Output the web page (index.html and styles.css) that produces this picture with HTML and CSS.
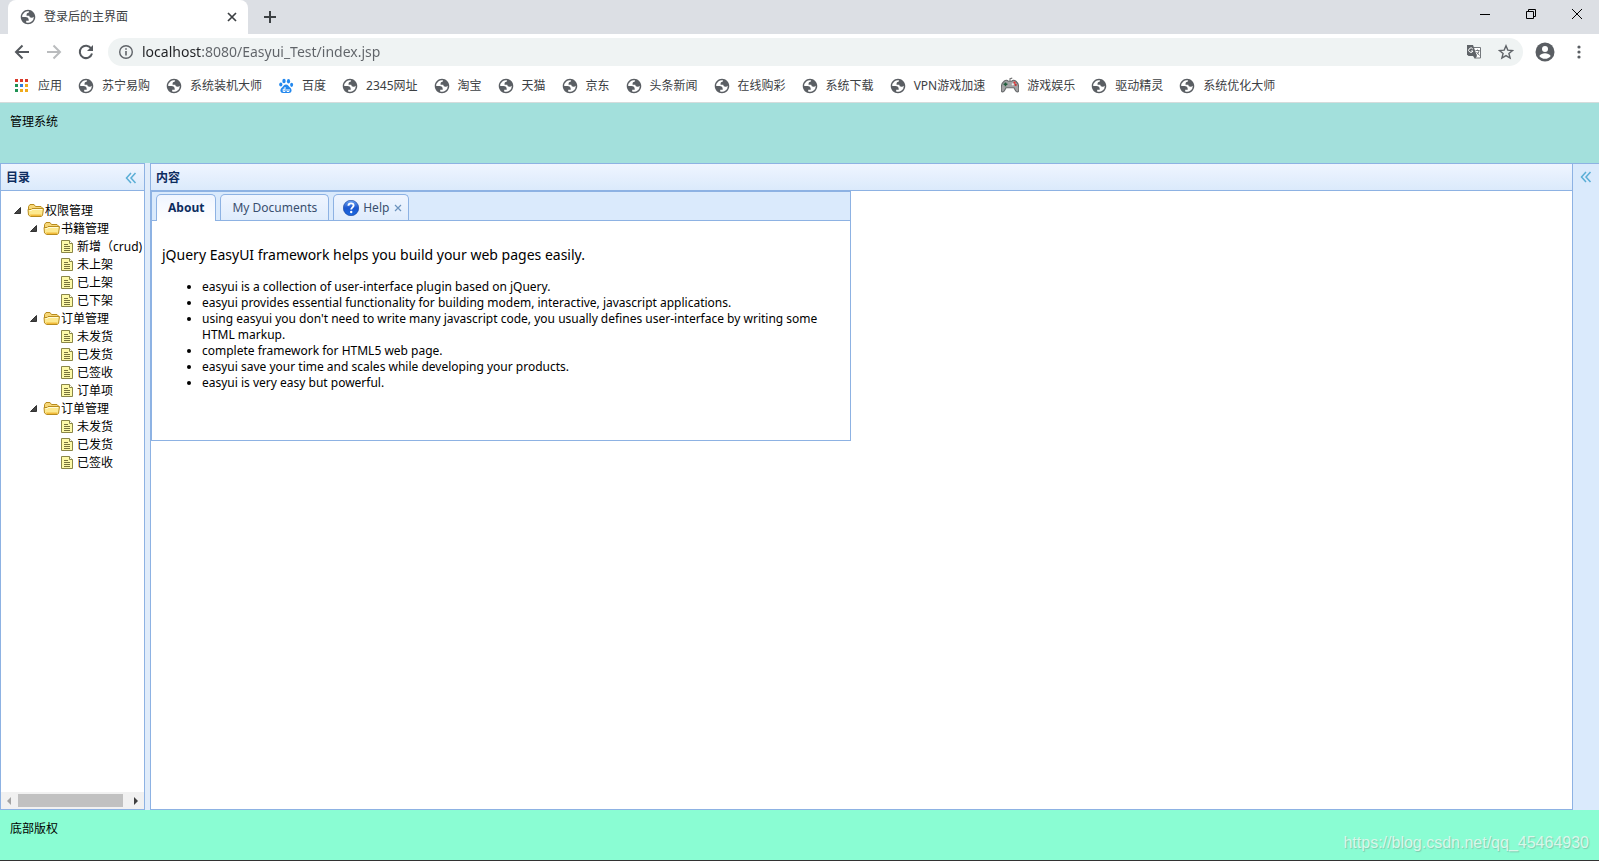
FILE: index.html
```
<!DOCTYPE html>
<html lang="zh-CN">
<head>
<meta charset="utf-8">
<title>登录后的主界面</title>
<link rel="stylesheet" href="styles.css">
</head>
<body>
<svg class="defs" width="0" height="0" aria-hidden="true">
  <symbol id="globe" viewBox="1 1 22 22">
    <path fill-rule="evenodd" d="M12 2C6.480 2 2 6.480 2 12s4.480 10 10 10 10-4.480 10-10S17.520 2 12 2zM4 12h4.400c3.407.022 4.922 1.730 4.543 5.127H9.488v2.470a8.004 8.004 0 0 0 10.498-8.083C19.327 12.504 18.332 13 17 13c-2.137 0-3.206-.916-3.206-2.750h-3.748c-.274-2.728.683-4.092 2.870-4.092 0-.975.327-1.597.811-1.970A8.004 8.004 0 0 0 4 12z" fill="#5a5e63"/>
  </symbol>
  <symbol id="folder" viewBox="0 0 18 18">
    <path d="M1.500 8V4.500l1.500-2h4l1.500 2H14l1.500 1.500v3" fill="#f7d777" stroke="#b98c1e"/>
    <path d="M1 7.500h3l1-1h11.500l-1 7-1.500 1H3.500L1.500 13z" fill="#fde98e" stroke="#b98c1e"/>
    <path d="M3 12.500h11.500l-.5 1.500H3.500z" fill="#f2bb3c"/>
    <path d="M2.500 8.500h2l1-1h9.500" fill="none" stroke="#fffbd6"/>
  </symbol>
  <symbol id="file" viewBox="0 0 18 18">
    <path d="M2.500 2.500h8l3 3v9h-11z" fill="#fdf9a8" stroke="#8a8648"/>
    <path d="M10.500 2.500v3h3" fill="#fff" stroke="#8a8648"/>
    <path d="M5 6.500h4M5 8.500h6M5 10.500h6M5 12.500h6" stroke="#77733c"/>
  </symbol>
  <symbol id="open" viewBox="0 0 16 18"><path d="M9.500 5.500v6h-6z" fill="#444" stroke="#333"/></symbol>
  <symbol id="collapse" viewBox="0 0 16 16"><path d="M8 3L3.500 8 8 13M12.500 3L8 8l4.500 5" fill="none" stroke="#5aaed6" stroke-width="1.500"/></symbol>
</svg>

<header class="browser">
  <div class="tabstrip">
    <div class="browser-tab">
      <svg class="i16"><use href="#globe"/></svg>
      <span class="browser-title">登录后的主界面</span>
      <button class="plain" aria-label="关闭标签页"><svg class="i16" viewBox="0 0 16 16"><path d="M4 4l8 8M12 4l-8 8" stroke="#3c4043" stroke-width="1.700"/></svg></button>
    </div>
    <button class="plain new-tab" aria-label="新标签页"><svg class="i16" viewBox="0 0 16 16"><path d="M8 2v12M2 8h12" stroke="#3c4043" stroke-width="2"/></svg></button>
    <div class="window-buttons">
      <button class="plain" aria-label="最小化"><svg class="i16" viewBox="0 0 16 16"><path d="M3 8.500h10" stroke="#000"/></svg></button>
      <button class="plain" aria-label="还原"><svg class="i16" viewBox="0 0 16 16"><path d="M3.500 5.500h7v7h-7zM5.500 5V3.500h7v7H11" fill="none" stroke="#000"/></svg></button>
      <button class="plain" aria-label="关闭"><svg class="i16" viewBox="0 0 16 16"><path d="M3 3l10 10M13 3L3 13" stroke="#000"/></svg></button>
    </div>
  </div>
  <div class="toolbar">
    <button class="plain" aria-label="后退"><svg class="i16" viewBox="0 0 16 16"><path d="M15 8H2.500M8.500 1.500L2 8l6.500 6.500" fill="none" stroke="#55595e" stroke-width="2"/></svg></button>
    <button class="plain" aria-label="前进"><svg class="i16" viewBox="0 0 16 16"><path d="M1 8h12.500M7.500 1.500L14 8l-6.500 6.500" fill="none" stroke="#babcbe" stroke-width="2"/></svg></button>
    <button class="plain" aria-label="刷新"><svg class="i16" viewBox="0 0 16 16"><path d="M13.200 4.500A6.200 6.200 0 1 0 14 9.500" fill="none" stroke="#55595e" stroke-width="2"/><path d="M15 1v6H9z" fill="#55595e"/></svg></button>
    <div class="omnibox">
      <svg class="i16" viewBox="0 0 16 16"><circle cx="8" cy="8" r="6.300" fill="none" stroke="#5f6368" stroke-width="1.400"/><path d="M8 7v4.500M8 4.200v1.600" stroke="#5f6368" stroke-width="1.600"/></svg>
      <input class="url" type="text" aria-label="地址" value="localhost:8080/Easyui_Test/index.jsp">
      <button class="plain" aria-label="翻译此页"><svg class="i16" viewBox="0 0 16 16"><path d="M7.500 3.500h7v10.500h-5" fill="#fff" stroke="#74787c"/><path d="M1 1h6l4 11H2.500L1 10.500z" fill="#5f6368"/><path d="M7 12h4l-2 3z" fill="#5f6368"/><path d="M6.800 5A2.200 2.200 0 1 0 7 7H5" fill="none" stroke="#fff"/><path d="M9.500 6.500h4M11.500 5.500v1M13 6.500c0 2-1.500 3.500-2.500 4M10.500 8l3 3.500" fill="none" stroke="#74787c"/></svg></button>
      <button class="plain" aria-label="收藏"><svg class="i16" viewBox="0 0 16 16"><path d="M8 1.800l1.800 4.300 4.700.4-3.600 3 1.200 4.600L8 11.600l-4.100 2.500 1.200-4.600-3.600-3 4.700-.4z" fill="none" stroke="#5f6368" stroke-width="1.400"/></svg></button>
    </div>
    <button class="plain" aria-label="用户"><svg class="i20" viewBox="0 0 20 20"><circle cx="10" cy="10" r="9.500" fill="#5a5e63"/><circle cx="10" cy="7" r="3" fill="#fff"/><path d="M4.300 14c1.200-2 3.400-2.800 5.700-2.800s4.500.8 5.700 2.800c-1.300 1.900-3.400 2.800-5.700 2.800S5.600 15.900 4.300 14z" fill="#fff"/></svg></button>
    <button class="plain" aria-label="菜单"><svg class="i16" viewBox="0 0 16 16"><g fill="#5a5e63"><circle cx="8" cy="3" r="1.600"/><circle cx="8" cy="8" r="1.600"/><circle cx="8" cy="13" r="1.600"/></g></svg></button>
  </div>
  <nav class="bookmarks" aria-label="书签">
    <a href="#"><svg class="i16" viewBox="0 0 16 16"><g fill="#d93a2b"><path d="M1 1h3v3H1zM6 1h3v3H6zM11 1h3v3h-3z"/></g><path d="M1 6h3v3H1zM1 11h3v3H1z" fill="#1f9254"/><path d="M6 6h3v3H6z" fill="#2f7de1"/><path d="M11 6h3v3h-3zM6 11h3v3H6zM11 11h3v3h-3z" fill="#f0ab1c"/></svg>应用</a>
    <a href="#"><svg class="i16"><use href="#globe"/></svg>苏宁易购</a>
    <a href="#"><svg class="i16"><use href="#globe"/></svg>系统装机大师</a>
    <a href="#"><svg class="i16" viewBox="0 0 16 16"><g fill="#2388ee"><ellipse cx="6" cy="3" rx="1.700" ry="2.300"/><ellipse cx="10.500" cy="3.200" rx="1.600" ry="2.200"/><ellipse cx="2.800" cy="6.500" rx="1.600" ry="2.100"/><ellipse cx="13.600" cy="6.800" rx="1.500" ry="2.100"/><path d="M8 6.500c2 0 2.600 1.800 4 3 2.600 2.200 1.800 5.500-1 5.500H5c-2.800 0-3.600-3.300-1-5.500 1.400-1.200 2-3 4-3z"/></g><path d="M7 9v4.500H5.200v-2.300H7M9 11v2.500h2V11" fill="none" stroke="#fff"/></svg>百度</a>
    <a href="#"><svg class="i16"><use href="#globe"/></svg>2345网址</a>
    <a href="#"><svg class="i16"><use href="#globe"/></svg>淘宝</a>
    <a href="#"><svg class="i16"><use href="#globe"/></svg>天猫</a>
    <a href="#"><svg class="i16"><use href="#globe"/></svg>京东</a>
    <a href="#"><svg class="i16"><use href="#globe"/></svg>头条新闻</a>
    <a href="#"><svg class="i16"><use href="#globe"/></svg>在线购彩</a>
    <a href="#"><svg class="i16"><use href="#globe"/></svg>系统下载</a>
    <a href="#"><svg class="i16"><use href="#globe"/></svg>VPN游戏加速</a>
    <a href="#"><svg class="i18" viewBox="0 0 16 16"><path d="M3 3.500c1.500-1 3-.5 3.500.3h3c.5-.8 2-1.300 3.500-.3C15 5 16 9 15.700 12c-.3 1.800-2 1.500-2.700.2L11.500 9.500h-7L3 12.200c-.700 1.300-2.400 1.600-2.700-.2C0 9 1 5 3 3.500z" fill="#a3a3a5" stroke="#66696b"/><path d="M8 4V1.500L10 1" fill="none" stroke="#777"/><path d="M4 4.800v3.400M2.300 6.500h3.400" stroke="#1f5c3b" stroke-width="1.400"/><circle cx="12" cy="5" r="1" fill="#e33"/><circle cx="13" cy="7" r="1" fill="#c33"/><circle cx="10.500" cy="6.500" r="1" fill="#eee"/></svg>游戏娱乐</a>
    <a href="#"><svg class="i16"><use href="#globe"/></svg>驱动精灵</a>
    <a href="#"><svg class="i16"><use href="#globe"/></svg>系统优化大师</a>
  </nav>
</header>

<div class="north">管理系统</div>

<div class="middle">
  <aside class="panel west">
    <div class="panel-header"><h2>目录</h2><button class="plain" aria-label="折叠"><svg class="i16"><use href="#collapse"/></svg></button></div>
    <div class="tree-wrap">
      <ul class="tree">
        <li><div class="node"><svg class="hit"><use href="#open"/></svg><svg class="i18"><use href="#folder"/></svg>权限管理</div>
          <ul>
            <li><div class="node"><svg class="hit"><use href="#open"/></svg><svg class="i18"><use href="#folder"/></svg>书籍管理</div>
              <ul class="leaves">
                <li class="node"><svg class="i18"><use href="#file"/></svg>新增（crud)</li>
                <li class="node"><svg class="i18"><use href="#file"/></svg>未上架</li>
                <li class="node"><svg class="i18"><use href="#file"/></svg>已上架</li>
                <li class="node"><svg class="i18"><use href="#file"/></svg>已下架</li>
              </ul></li>
            <li><div class="node"><svg class="hit"><use href="#open"/></svg><svg class="i18"><use href="#folder"/></svg>订单管理</div>
              <ul class="leaves">
                <li class="node"><svg class="i18"><use href="#file"/></svg>未发货</li>
                <li class="node"><svg class="i18"><use href="#file"/></svg>已发货</li>
                <li class="node"><svg class="i18"><use href="#file"/></svg>已签收</li>
                <li class="node"><svg class="i18"><use href="#file"/></svg>订单项</li>
              </ul></li>
            <li><div class="node"><svg class="hit"><use href="#open"/></svg><svg class="i18"><use href="#folder"/></svg>订单管理</div>
              <ul class="leaves">
                <li class="node"><svg class="i18"><use href="#file"/></svg>未发货</li>
                <li class="node"><svg class="i18"><use href="#file"/></svg>已发货</li>
                <li class="node"><svg class="i18"><use href="#file"/></svg>已签收</li>
              </ul></li>
          </ul></li>
      </ul>
    </div>
    <div class="scrollbar">
      <button class="plain" aria-label="向左滚动"><svg class="i16" viewBox="0 0 16 16"><path d="M10 4v8L6 8z" fill="#a3a3a3"/></svg></button>
      <div class="track"><div class="thumb"></div></div>
      <button class="plain" aria-label="向右滚动"><svg class="i16" viewBox="0 0 16 16"><path d="M6 4v8l4-4z" fill="#404040"/></svg></button>
    </div>
  </aside>

  <main class="panel center">
    <div class="panel-header"><h2>内容</h2></div>
    <section class="tabs">
      <div class="tabs-header" role="tablist">
        <button class="tab selected" role="tab" aria-selected="true">About</button>
        <button class="tab" role="tab">My Documents</button>
        <div class="tab closable">
          <button class="plain help" role="tab"><svg class="i16" viewBox="0 0 16 16"><defs><linearGradient id="ball" x2="0" y2="1"><stop offset="0" stop-color="#6da5f5"/><stop offset=".5" stop-color="#1b56cf"/><stop offset="1" stop-color="#1a6ae0"/></linearGradient></defs><circle cx="8" cy="8" r="7.700" fill="url(#ball)" stroke="#123a94" stroke-width=".6"/><path d="M5.400 5.800C5.500 4.200 6.500 3.400 8 3.400c1.600 0 2.600.9 2.600 2.200C10.600 7.300 8.200 7.500 8.200 9.600" fill="none" stroke="#fff" stroke-width="1.900"/><circle cx="8.200" cy="12" r="1.200" fill="#fff"/></svg>Help</button>
          <button class="plain" aria-label="关闭 Help"><svg class="i10" viewBox="0 0 10 10"><path d="M2 2l6 6M8 2L2 8" stroke="#6d93bd" stroke-width="1.200"/></svg></button>
        </div>
      </div>
      <div class="tab-body">
        <p>jQuery EasyUI framework helps you build your web pages easily.</p>
        <ul>
          <li>easyui is a collection of user-interface plugin based on jQuery.</li>
          <li>easyui provides essential functionality for building modem, interactive, javascript applications.</li>
          <li>using easyui you don't need to write many javascript code, you usually defines user-interface by writing some HTML markup.</li>
          <li>complete framework for HTML5 web page.</li>
          <li>easyui save your time and scales while developing your products.</li>
          <li>easyui is very easy but powerful.</li>
        </ul>
      </div>
    </section>
  </main>

  <aside class="east"><button class="plain" aria-label="展开"><svg class="i16"><use href="#collapse"/></svg></button></aside>
</div>

<footer class="south"><span>底部版权</span><span class="watermark">https://blog.csdn.net/qq_45464930</span></footer>
</body>
</html>
```
FILE: styles.css
```
* { box-sizing: border-box; }
body {
  margin: 0;
  min-height: 100vh;
  display: flex;
  flex-direction: column;
  background: #fff;
  color: #000;
  font: 12px/18px "Noto Sans", "Noto Sans CJK SC", sans-serif;
}
svg { display: block; flex: none; }
.defs { position: absolute; }
.i10 { width: 10px; height: 10px; }
.i16 { width: 16px; height: 16px; }
.i18 { width: 18px; height: 18px; }
.i20 { width: 20px; height: 20px; }
.plain { border: 0; padding: 0; background: none; font: inherit; color: inherit; display: block; flex: none; }

.tabstrip { display: flex; height: 34px; padding-left: 8px; background: #dcdfe4; }
.browser-tab {
  width: 240px;
  display: flex;
  align-items: center;
  padding: 0 8px 0 12px;
  gap: 8px;
  border-radius: 8px 8px 0 0;
  background: #fff;
  color: #3c4043;
}
.browser-title { flex: 1; }
.new-tab { padding: 0 14px; }
.window-buttons { display: flex; align-items: flex-start; gap: 30px; margin-left: auto; padding: 6px 14px 0 0; }

.toolbar { display: flex; align-items: center; padding: 4px 12px 4px 14px; }
.toolbar > .plain { margin-right: 16px; }
.toolbar > .plain:last-child { margin-right: 0; }
.omnibox {
  flex: 1;
  display: flex;
  align-items: center;
  gap: 16px;
  height: 28px;
  margin: 0 12px 0 -2px;
  padding: 0 9px 0 10px;
  border-radius: 14px;
  background: #eff3f3;
}
.omnibox > svg { margin-right: -8px; }
.url {
  flex: 1;
  min-width: 0;
  border: 0;
  padding: 0;
  outline: 0;
  font: 14px/20px "Noto Sans", sans-serif;
  color: transparent;
  background: linear-gradient(90deg, #202124 60px, #5f6368 60px);
  -webkit-background-clip: text;
  background-clip: text;
}
.bookmarks { display: flex; gap: 16px; height: 33px; padding: 0 14px 1px; align-items: center; border-bottom: 1px solid #d5dcdc; white-space: nowrap; overflow: hidden; }
.bookmarks a { display: flex; align-items: center; gap: 8px; color: #3c4043; text-decoration: none; }

.north { height: 60px; padding: 10px; background: #a3e0dc; }

.middle { flex: 1; display: flex; background: #e0ecfa; }
.panel { display: flex; flex-direction: column; border: 1px solid #8db2e3; background: #fff; }
.panel-header {
  display: flex;
  align-items: center;
  justify-content: space-between;
  height: 27px;
  padding: 1px 5px 0;
  border-bottom: 1px solid #8db2e3;
  background: linear-gradient(#eff5ff, #dbeafb);
}
.panel-header h2 { margin: 0; font-size: 12px; line-height: 18px; color: #0e2d5f; }
.west { width: 145px; margin-right: 5px; }
.tree-wrap { flex: 1; overflow: hidden; padding: 11px 0 0 10px; }
.tree, .tree ul { margin: 0; padding: 0; list-style: none; }
.tree ul { padding-left: 16px; }
.tree .leaves { padding-left: 32px; }
.node { display: flex; height: 18px; white-space: nowrap; }
.hit { width: 16px; height: 18px; }
.scrollbar { display: flex; align-items: center; height: 17px; background: #f1f1f1; }
.track { flex: 1; padding-left: 1px; }
.thumb { width: 95%; height: 13px; background: #c1c1c1; }

.center { flex: 1; min-width: 0; }
.tabs { width: 700px; max-width: 100%; border: 1px solid #8db2e3; }
.tabs-header { display: flex; align-items: flex-end; gap: 4px; height: 29px; padding: 0 4px; border-bottom: 1px solid #8db2e3; background: #daeafc; }
.tab {
  height: 26px;
  padding: 0 11px;
  border: 1px solid #8db2e3;
  border-bottom: 0;
  border-radius: 5px 5px 0 0;
  background: linear-gradient(#eff5ff, #dfecfc);
  color: #3a4f6e;
  font: 12px/24px "Noto Sans", sans-serif;
}
.selected { height: 27px; margin-bottom: -1px; background: linear-gradient(#eff5ff, #fff); color: #0e2d5f; font-weight: bold; }
.closable { display: flex; align-items: center; gap: 4px; padding: 0 5px 0 9px; }
.help { display: flex; align-items: center; gap: 4px; }
.tab-body { padding: 10px 10px 49px; }
.tab-body p { margin: 14px 0; font-size: 14px; line-height: 20px; }
.tab-body ul { margin: 12px 0 0; padding-left: 40px; font-size: 12px; line-height: 16px; }

.east { width: 26px; padding: 5px; border-top: 1px solid #8db2e3; background: #daeafc; }

.south { position: relative; height: 51px; padding: 10px; border-bottom: 1px solid #333; background: #8afdd3; }
.watermark { position: absolute; right: 10px; bottom: 7px; font: 16px/20px "Liberation Sans", sans-serif; color: #d9f7ea; text-shadow: 1px 1px 1px #7fc9ad; }
```
